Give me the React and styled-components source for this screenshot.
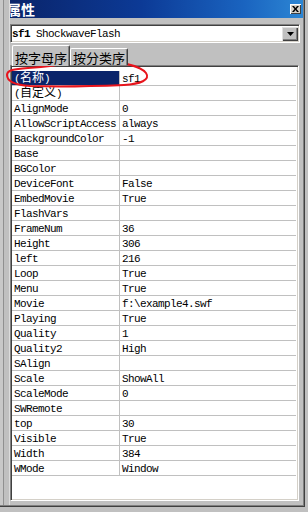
import React from 'react'
import styled, { createGlobalStyle } from 'styled-components'

const mono = `"Liberation Mono", "Noto Sans CJK SC", monospace`
const cjk = `"Noto Sans CJK SC", "Liberation Sans", sans-serif`

const GlobalStyle = createGlobalStyle`
	html, body {
		margin: 0;
		padding: 0;
		background: #c0c0c0;
	}
	body {
		width: 308px;
		height: 512px;
		overflow: hidden;
	}
	* {
		box-sizing: border-box;
	}
`

const rows = [
	['(名称)', 'sf1'],
	['(自定义)', ''],
	['AlignMode', '0'],
	['AllowScriptAccess', 'always'],
	['BackgroundColor', '-1'],
	['Base', ''],
	['BGColor', ''],
	['DeviceFont', 'False'],
	['EmbedMovie', 'True'],
	['FlashVars', ''],
	['FrameNum', '36'],
	['Height', '306'],
	['left', '216'],
	['Loop', 'True'],
	['Menu', 'True'],
	['Movie', 'f:\\example4.swf'],
	['Playing', 'True'],
	['Quality', '1'],
	['Quality2', 'High'],
	['SAlign', ''],
	['Scale', 'ShowAll'],
	['ScaleMode', '0'],
	['SWRemote', ''],
	['top', '30'],
	['Visible', 'True'],
	['Width', '384'],
	['WMode', 'Window'],
]

// splits latin / chinese so each gets the right metrics
const Label = ({ text }) => {
	const parts = text.split(/([\u4e00-\u9fff]+)/).filter(Boolean)
	return parts.map((p, i) =>
		/[\u4e00-\u9fff]/.test(p) ? <Cn key={i}>{p}</Cn> : <span key={i}>{p}</span>
	)
}

const App = () => {
	return (
		<Screen>
			<GlobalStyle />
			<Window>
				<LeftStrip />
				<Pane>
					<TitleBar>
						<Title>属性</Title>
						<CloseButton>
							<svg width="7" height="6" viewBox="0 0 7 6">
								<path d="M0 0h2l1.5 2 1.5-2h2L4.5 3 7 6H5L3.5 4 2 6H0l2.5-3z" fill="#000" />
							</svg>
						</CloseButton>
					</TitleBar>
					<Combo>
						<ComboText>
							<b>sf1</b> ShockwaveFlash
						</ComboText>
						<DropButton>
							<svg width="7" height="4" viewBox="0 0 7 4">
								<path d="M0 0h7L3.5 4z" fill="#000" />
							</svg>
						</DropButton>
					</Combo>
					<Tabs>
						<Tab $active>按字母序</Tab>
						<Tab>按分类序</Tab>
					</Tabs>
					<Grid>
						{rows.map(([name, value], i) => (
							<Row key={name}>
								<NameCell $selected={i === 0}>
									<Label text={name} />
								</NameCell>
								<ValueCell>{value}</ValueCell>
							</Row>
						))}
					</Grid>
				</Pane>
			</Window>
			<Scribble width="308" height="512" viewBox="0 0 308 512">
				<path
					d="M98 60 C120 62 140 65 146 73 C151 80 140 84 124 85 C100 86 60 87 30 86 C14 85 7 81 7 75 C7 70 14 69 28 68 C45 67 60 65 70 62 C78 60 88 59 102 61"
					fill="none"
					stroke="#e8141c"
					strokeWidth="2"
					strokeLinecap="round"
				/>
			</Scribble>
		</Screen>
	)
}

const Screen = styled.div`
	position: relative;
	width: 308px;
	height: 512px;
	background: #c0c0c0;
	overflow: hidden;
`

const Window = styled.div`
	display: flex;
	width: 305px;
	height: 507px;
	padding: 0 2px 2px 0;
	background: #c0c0c0;
	box-shadow: inset -1px -1px #404040, inset -2px -2px #808080;
`

const LeftStrip = styled.div`
	width: 10px;
	flex-shrink: 0;
	background: #c0c0c0;
	border-left: 3px solid #c8c8c8;
	box-shadow: inset 1px 0 #909090, inset -1px 0 #dcdcdc;
`

const Pane = styled.div`
	flex: 1;
	display: flex;
	flex-direction: column;
	min-width: 0;
`

const TitleBar = styled.div`
	height: 18px;
	display: flex;
	align-items: center;
	justify-content: space-between;
	padding-right: 2px;
	background: linear-gradient(to right, #0a246a 0%, #0c3a96 45%, #1a64c0 80%, #2c86d4 100%);
	overflow: hidden;
`

const Title = styled.span`
	margin-left: -3px;
	color: #fff;
	font-family: ${cjk};
	font-size: 14px;
	font-weight: bold;
	line-height: 18px;
`

const CloseButton = styled.div`
	width: 11px;
	height: 10px;
	display: flex;
	align-items: center;
	justify-content: center;
	background: #d4d0c8;
	box-shadow: inset 1px 1px #fff, inset -1px -1px #404040;
`

const Combo = styled.div`
	margin: 6px 3px 0 0;
	height: 19px;
	display: flex;
	align-items: center;
	background: #fff;
	border: 1px solid;
	border-color: #808080 #fff #fff #808080;
	box-shadow: inset 1px 1px #404040, inset -1px -1px #d4d0c8;
	padding: 0 1px 0 1px;
`

const ComboText = styled.div`
	flex: 1;
	font-family: ${mono};
	font-size: 11px;
	letter-spacing: -0.6px;
	color: #000;
	white-space: pre;
	b {
		font-weight: bold;
	}
`

const DropButton = styled.div`
	width: 16px;
	height: 14px;
	display: flex;
	align-items: center;
	justify-content: center;
	background: #c0c0c0;
	box-shadow: inset 1px 1px #e0e0e0, inset -1px -1px #404040, inset -2px -2px #808080;
`

const Tabs = styled.div`
	margin-top: 2px;
	height: 20px;
	display: flex;
	align-items: flex-end;
	padding-left: 2px;
	position: relative;
	z-index: 1;
`

const Tab = styled.div`
	width: 58px;
	height: ${p => (p.$active ? '21px' : '17px')};
	margin-bottom: ${p => (p.$active ? '-1px' : '0')};
	padding-top: ${p => (p.$active ? '2px' : '0')};
	display: flex;
	align-items: center;
	justify-content: center;
	background: #c0c0c0;
	border-top: 1px solid #fff;
	border-left: 1px solid #fff;
	border-right: 1px solid #404040;
	box-shadow: inset -1px 0 #808080;
	font-family: ${cjk};
	font-size: 13px;
	line-height: 15px;
	color: #000;
	border-radius: 2px 2px 0 0;
`

const Grid = styled.div`
	flex: 1;
	margin: 0 4px 4px 0;
	padding-top: 5px;
	background: #fff;
	border: 1px solid;
	border-color: #808080 #fff #fff #808080;
	box-shadow: inset 1px 1px #404040, inset -1px -1px #d4d0c8;
	padding-left: 1px;
	padding-right: 2px;
	overflow: hidden;
`

const Row = styled.div`
	display: grid;
	grid-template-columns: 108px 1fr;
	height: 15px;
	border-bottom: 1px solid #c0c0c0;
	font-family: ${mono};
	font-size: 11px;
	letter-spacing: -0.6px;
	line-height: 16px;
	color: #000;
`

const NameCell = styled.div`
	height: 14px;
	padding-left: 2px;
	border-right: 1px solid #c0c0c0;
	white-space: pre;
	overflow: hidden;
	background: ${p => (p.$selected ? '#0a246a' : 'transparent')};
	color: ${p => (p.$selected ? '#fff' : '#000')};
`

const ValueCell = styled.div`
	height: 14px;
	padding-left: 2px;
	white-space: pre;
	overflow: hidden;
`

const Cn = styled.span`
	font-family: ${cjk};
	font-size: 12px;
	letter-spacing: 0;
	line-height: 10px;
`

const Scribble = styled.svg`
	position: absolute;
	left: 0;
	top: 0;
	pointer-events: none;
`

export default App
